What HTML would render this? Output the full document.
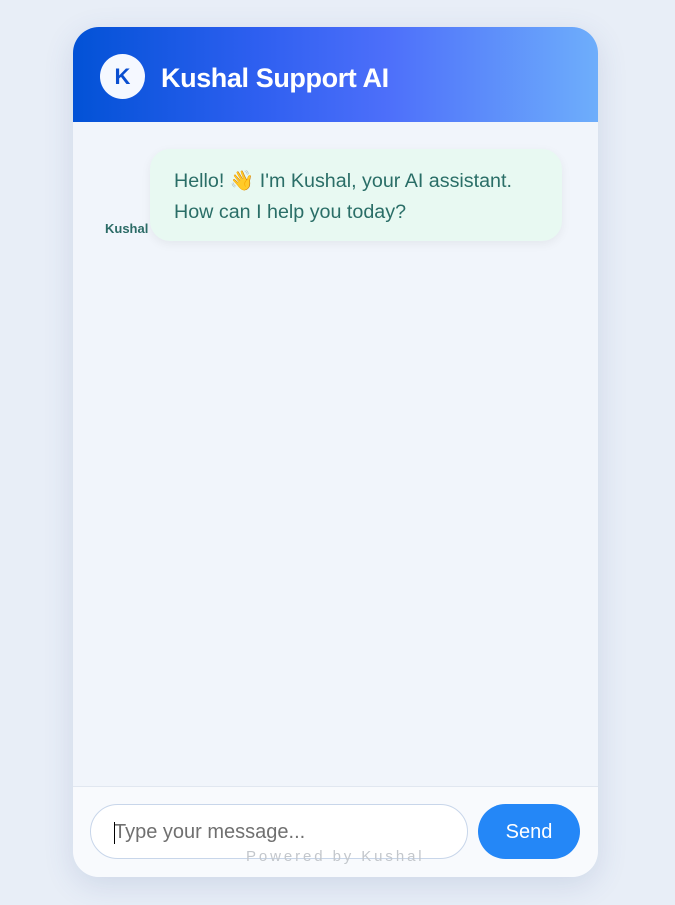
<!DOCTYPE html>
<html><head><style>
*{box-sizing:border-box;margin:0;padding:0}
body{width:675px;height:905px;background:#e8eef7;font-family:"Liberation Sans",sans-serif;position:relative;overflow:hidden}
.card{position:absolute;left:73px;top:27px;width:525px;height:850px;border-radius:26px;background:#f1f5fb;overflow:hidden;box-shadow:0 8px 30px rgba(60,90,150,.15)}
.hdr{height:95px;background:linear-gradient(90deg,#0252d6 0%,#2e5ff0 35%,#4d6ffa 60%,#6eaefb 100%);position:relative}
.av{position:absolute;left:27px;top:27px;width:45px;height:45px;border-radius:50%;background:#f5f8ff;color:#0a4ed0;font-weight:bold;font-size:22px;text-align:center;line-height:45px}
.ttl{position:absolute;left:88px;top:36px;color:#fff;font-size:27px;font-weight:bold;letter-spacing:-.4px}
.bub{position:absolute;left:77px;top:122px;width:412px;height:92px;background:#e8f9f2;border-radius:20px;box-shadow:0 3px 10px rgba(0,0,0,.06);color:#2a6e67;font-size:19.7px;line-height:31px;padding:17px 24px}
.who{position:absolute;left:32px;top:194px;font-size:13px;font-weight:bold;color:#2c6b66}
.foot{position:absolute;left:0;top:759px;width:525px;height:91px;background:#f8fafd;border-top:1px solid #e1e7f0}
.in{position:absolute;left:17px;top:17px;width:378px;height:55px;border:1px solid #c8d6ea;border-radius:28px;background:#fff;color:#707070;font-size:20px;line-height:55px;padding-left:23px}
.in:before{content:"";position:absolute;left:23px;top:17px;width:1px;height:22px;background:#000}
.btn{position:absolute;left:405px;top:17px;width:102px;height:55px;border-radius:28px;background:#2487f7;color:#fff;font-size:20px;text-align:center;line-height:56px}
.pw{position:absolute;left:173px;top:61px;font-size:15px;letter-spacing:2.9px;color:#c3c7cc}
</style></head><body>
<div class="card">
<div class="hdr"><div class="av">K</div><div class="ttl">Kushal Support AI</div></div>
<div class="bub">Hello! 👋 I'm Kushal, your AI assistant.<br>How can I help you today?</div>
<div class="who">Kushal</div>
<div class="foot"><div class="in">Type your message...</div><div class="btn">Send</div><div class="pw">Powered by Kushal</div></div>
</div>
</body></html>
